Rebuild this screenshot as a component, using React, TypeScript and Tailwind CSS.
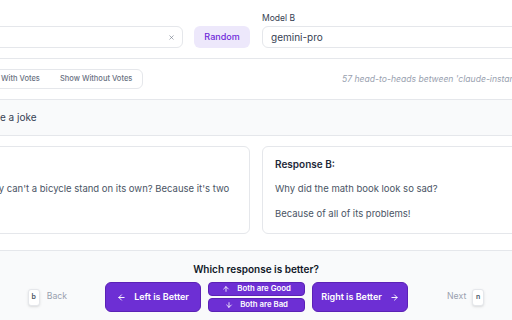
import { ArrowLeft, ArrowRight, ArrowUp, ArrowDown, X } from 'lucide-react';

function KeyHint({ k }: { k: string }) {
  return (
    <span className="flex h-[17px] w-[12px] items-center justify-center rounded-[3px] border border-gray-200 bg-white text-[7px] font-semibold text-gray-600 shadow-sm">
      {k}
    </span>
  );
}

function App() {
  return (
    <div className="h-[320px] w-[512px] overflow-hidden bg-white font-['Inter',sans-serif] text-gray-700">
      <div className="-ml-[124px] w-[760px]">
        {/* model pickers */}
        <div className="border-b border-gray-200 px-4 pb-[10px] pt-[11px]">
          <div className="grid grid-cols-2 gap-3">
            <div className="flex items-end gap-[11px]">
              <div className="flex-1">
                <div className="mb-[1px] text-[8.5px] leading-[14px] text-gray-700">Model A</div>
                <div className="flex h-[22px] items-center justify-between rounded-md border border-gray-200 bg-white pl-2 pr-[7px] text-[10px]">
                  <span>claude-instant-v1</span>
                  <X className="h-[7px] w-[7px] text-gray-500" strokeWidth={2} />
                </div>
              </div>
              <button className="h-[22px] w-[56px] rounded-md bg-[#ede8fb] text-[9px] font-medium text-[#6d28d9]">
                Random
              </button>
            </div>
            <div>
              <div className="mb-[1px] text-[8.5px] leading-[14px] text-gray-700">Model B</div>
              <div className="flex h-[22px] w-[264px] items-center justify-between rounded-md border border-gray-200 bg-white pl-2 pr-[7px] text-[10px]">
                <span>gemini-pro</span>
                <X className="h-[7px] w-[7px] text-gray-500" strokeWidth={2} />
              </div>
            </div>
          </div>
        </div>

        {/* filter row */}
        <div className="flex h-[41px] items-center border-b border-gray-200 px-4">
          <div className="ml-[25px] flex h-[20px] items-center rounded-md border border-gray-200 text-[7.5px] font-medium text-gray-500">
            <span className="px-[10px]">Show All</span>
            <span className="px-[10px]">Show With Votes</span>
            <span className="px-[10px]">Show Without Votes</span>
          </div>
          <span className="ml-auto mr-[18px] text-[8.6px] italic text-gray-400">
            57 head-to-heads between 'claude-instant-v1' and 'gemini-pro'
          </span>
        </div>

        {/* prompt */}
        <div className="flex h-[36px] items-center border-b border-gray-200 bg-gray-50 px-4 text-[10px] text-gray-700">
          <span className="ml-[80px]">Tell me a joke</span>
        </div>

        {/* responses */}
        <div className="grid grid-cols-2 gap-3 border-b border-gray-200 px-4 pb-[16px] pt-[10px]">
          <div className="h-[88px] rounded-md border border-gray-200 bg-white px-3 pt-[10px] text-[9.5px] leading-[14px]">
            <div className="text-[10px] font-semibold text-gray-800">Response A:</div>
            <p className="mt-[11px] text-gray-600">
              Sure, here's one: Why can't a bicycle stand on its own? Because it's two tired!
            </p>
          </div>
          <div className="h-[88px] rounded-md border border-gray-200 bg-white px-3 pt-[10px] text-[9.5px] leading-[14px]">
            <div className="text-[10px] font-semibold text-gray-800">Response B:</div>
            <p className="mt-[11px] text-gray-600">Why did the math book look so sad?</p>
            <p className="mt-[11px] text-gray-600">Because of all of its problems!</p>
          </div>
        </div>

        {/* vote */}
        <div className="h-[80px] bg-gray-50 pt-[10px]">
          <div className="text-center text-[10px] font-semibold leading-[16px] text-gray-900">
            Which response is better?
          </div>
          <div className="mt-[5px] flex items-center justify-center">
            <div className="mr-[38px] flex items-center gap-[7px] text-[8.7px] text-gray-400">
              <KeyHint k="b" />
              <span>Back</span>
            </div>
            <div className="flex gap-[7px]">
              <button className="flex h-[30px] w-[96px] items-center justify-center gap-2 rounded-md border border-[#5b21b6] bg-[#6d2fd4] text-[9px] font-semibold text-white">
                <ArrowLeft className="h-[9px] w-[9px]" strokeWidth={2.5} />
                Left is Better
              </button>
              <div className="flex w-[97px] flex-col gap-[2px]">
                <button className="flex h-[14px] items-center justify-center gap-[7px] rounded-[4px] border border-[#5b21b6] bg-[#6d2fd4] text-[7.8px] font-semibold text-white">
                  <ArrowUp className="h-[8px] w-[8px]" strokeWidth={2.5} />
                  Both are Good
                </button>
                <button className="flex h-[14px] items-center justify-center gap-[7px] rounded-[4px] border border-[#5b21b6] bg-[#6d2fd4] text-[7.8px] font-semibold text-white">
                  <ArrowDown className="h-[8px] w-[8px]" strokeWidth={2.5} />
                  Both are Bad
                </button>
              </div>
              <button className="flex h-[30px] w-[96px] items-center justify-center gap-2 rounded-md border border-[#5b21b6] bg-[#6d2fd4] text-[9px] font-semibold text-white">
                Right is Better
                <ArrowRight className="h-[9px] w-[9px]" strokeWidth={2.5} />
              </button>
            </div>
            <div className="ml-[39px] flex items-center gap-[6px] text-[8.7px] text-gray-400">
              <span>Next</span>
              <KeyHint k="n" />
            </div>
          </div>
        </div>
      </div>
    </div>
  );
}

export default App;
